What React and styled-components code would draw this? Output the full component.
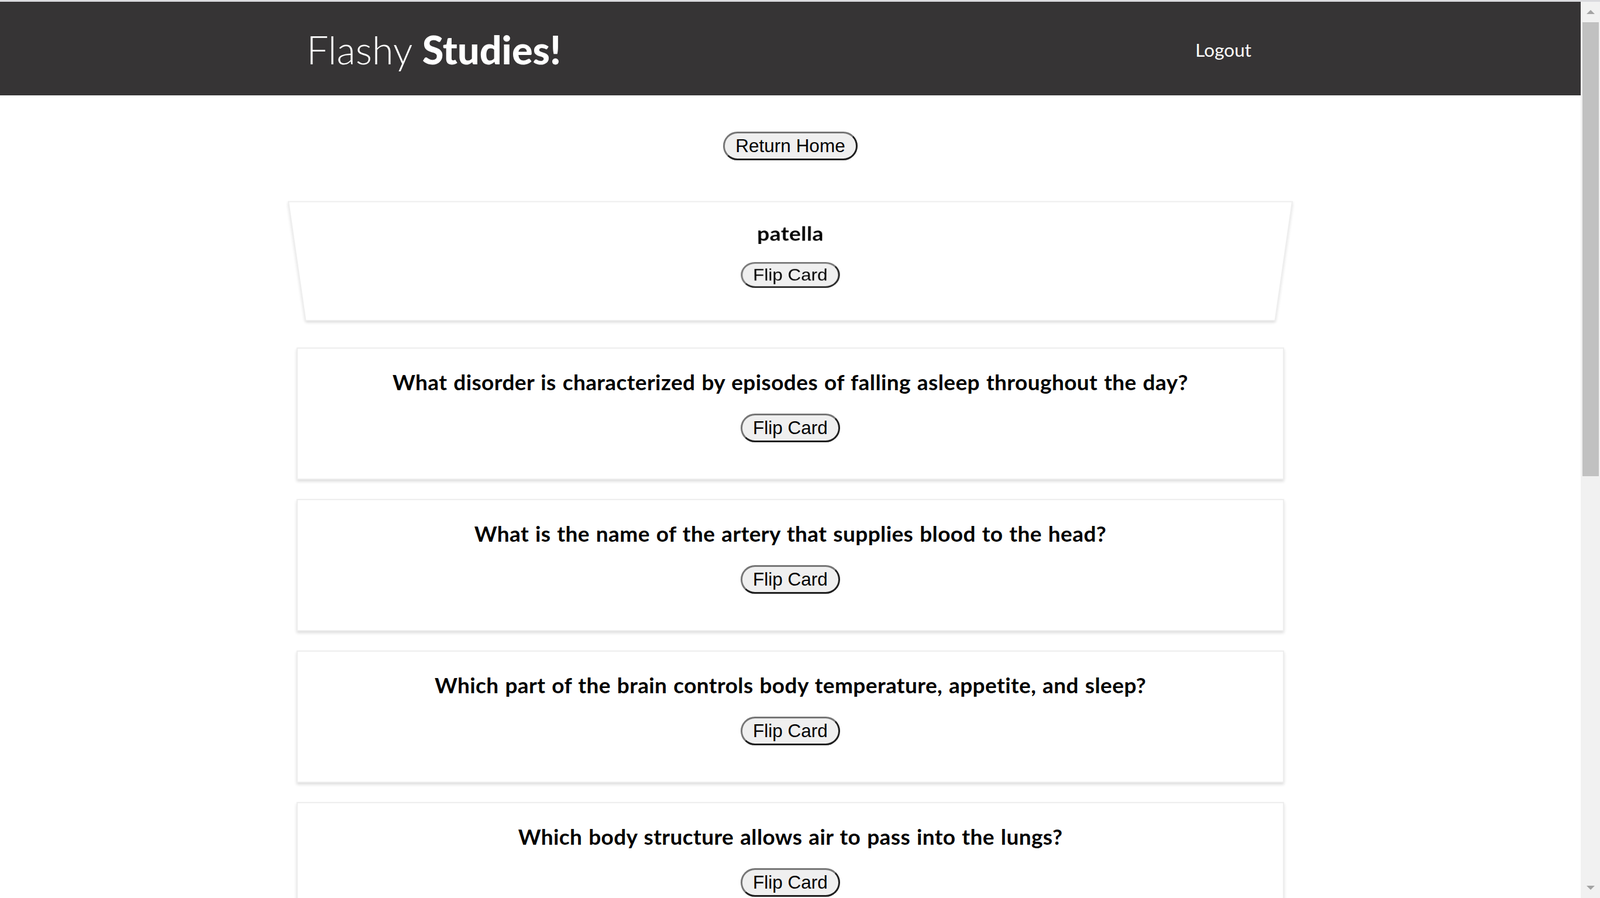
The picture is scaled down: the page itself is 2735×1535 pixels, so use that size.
import React from 'react'
import styled, { createGlobalStyle } from 'styled-components'

const GlobalStyle = createGlobalStyle`
    html, body {
        margin: 0;
        padding: 0;
        background: #ffffff;
        overflow: hidden;
    }
    body {
        font-family: Lato, "Open Sans", sans-serif;
    }
`

const TopStrip = styled.div`
    height: 3px;
    background: #dadade;
`

const Frame = styled.div`
    display: flex;
    height: calc(100vh - 3px);
`

const Viewport = styled.div`
    flex: 1;
    min-width: 0;
    overflow: hidden;
`

const ScrollTrack = styled.div`
    flex: none;
    width: 33px;
    background: #f1f1f1;
    display: flex;
    flex-direction: column;
`

const ScrollArrow = styled.div`
    height: 35px;
    display: flex;
    align-items: center;
    justify-content: center;

    &::before {
        content: '';
        border-left: 7px solid transparent;
        border-right: 7px solid transparent;
        ${p => (p.$down
            ? 'border-top: 7px solid #a3a3a3;'
            : 'border-bottom: 7px solid #a3a3a3;')}
    }
`

const ScrollThumb = styled.div`
    height: 776px;
    margin: 0 2px 0 3px;
    background: #c1c1c1;
`

const ScrollRest = styled.div`
    flex: 1;
`

const Header = styled.header`
    background: #363435;
    height: 160px;
    padding-top: 4px;
    box-sizing: border-box;
`

const HeaderInner = styled.nav`
    width: 1688px;
    height: 100%;
    margin: 0 auto;
    padding: 0 56px 0 17px;
    box-sizing: border-box;
    display: flex;
    align-items: center;
    justify-content: space-between;
`

const Brand = styled.h1`
    margin: 0;
    font-family: Lato, "Open Sans", sans-serif;
    font-size: 66.5px;
    font-weight: 300;
    color: #ffffff;
    line-height: 1.2;
`

const BrandStrong = styled.span`
    font-weight: 900;
`

const NavLink = styled.a`
    font-family: Lato, "Open Sans", sans-serif;
    font-size: 31.5px;
    color: #ffffff;
    text-decoration: none;
    cursor: pointer;
`

const Main = styled.main`
    padding-top: 62px;
    display: flex;
    flex-direction: column;
    align-items: center;
`

const PillButton = styled.button`
    font-family: "Liberation Sans", Arial, sans-serif;
    font-size: 31.5px;
    color: #000000;
    background: #efefef;
    border: 3px solid;
    border-color: #767676 #1f1f1f #1f1f1f #767676;
    border-radius: 30px;
    padding: 3px 18px;
    line-height: normal;
    cursor: pointer;
`

const CardList = styled.section`
    margin-top: 61px;
    display: flex;
    flex-direction: column;
    gap: 33px;
`

const Card = styled.div`
    width: 1688px;
    box-sizing: border-box;
    padding: 35px 20px 62px;
    background: #ffffff;
    border: 2px solid #eeeeee;
    box-shadow: 0 3px 5px rgba(0, 0, 0, 0.14);
    display: flex;
    flex-direction: column;
    align-items: center;
    transform: ${p => (p.$flipping ? 'perspective(2715px) rotateX(-25deg)' : 'none')};
`

const Prompt = styled.h3`
    margin: 0 0 33px;
    font-family: Lato, "Open Sans", sans-serif;
    font-size: 37px;
    font-weight: 700;
    letter-spacing: 0.4px;
    word-spacing: 1.5px;
    line-height: 43px;
    color: #000000;
    text-align: center;
`

const cards = [
    { id: 1, text: 'patella', flipping: true },
    { id: 2, text: 'What disorder is characterized by episodes of falling asleep throughout the day?' },
    { id: 3, text: 'What is the name of the artery that supplies blood to the head?' },
    { id: 4, text: 'Which part of the brain controls body temperature, appetite, and sleep?' },
    { id: 5, text: 'Which body structure allows air to pass into the lungs?' },
]

function App() {
    return (
        <>
            <GlobalStyle />
            <TopStrip />
            <Frame>
                <Viewport>
                    <Header>
                        <HeaderInner>
                            <Brand>Flashy <BrandStrong>Studies!</BrandStrong></Brand>
                            <NavLink>Logout</NavLink>
                        </HeaderInner>
                    </Header>
                    <Main>
                        <PillButton>Return Home</PillButton>
                        <CardList>
                            {cards.map(card => (
                                <Card key={card.id} $flipping={card.flipping}>
                                    <Prompt>{card.text}</Prompt>
                                    <PillButton>Flip Card</PillButton>
                                </Card>
                            ))}
                        </CardList>
                    </Main>
                </Viewport>
                <ScrollTrack>
                    <ScrollArrow />
                    <ScrollThumb />
                    <ScrollRest />
                    <ScrollArrow $down />
                </ScrollTrack>
            </Frame>
        </>
    )
}

export default App
